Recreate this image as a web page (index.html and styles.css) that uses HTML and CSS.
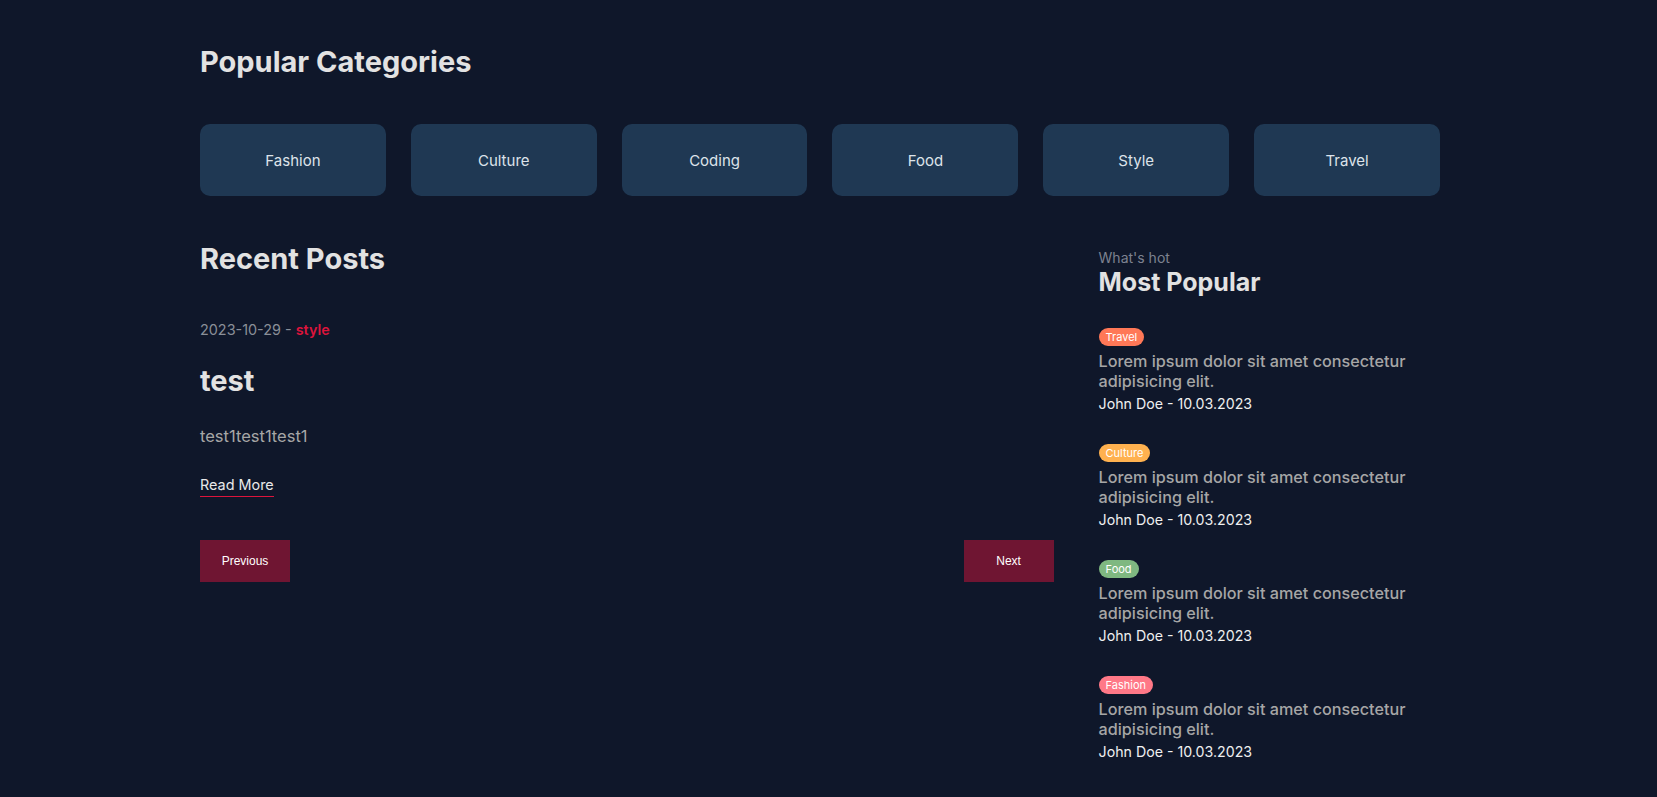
FILE: index.html
```html
<!DOCTYPE html>
<html lang="en">
<head>
<meta charset="utf-8">
<title>Blog</title>
<link rel="stylesheet" href="styles.css">
</head>
<body>
<div class="wrapper">
  <section class="categories">
    <h2 class="section-title">Popular Categories</h2>
    <div class="cat-list">
      <a class="cat-card">Fashion</a>
      <a class="cat-card">Culture</a>
      <a class="cat-card">Coding</a>
      <a class="cat-card">Food</a>
      <a class="cat-card">Style</a>
      <a class="cat-card">Travel</a>
    </div>
  </section>
  <div class="content">
    <main class="posts">
      <h2 class="section-title recent">Recent Posts</h2>
      <article class="post">
        <div class="post-meta"><span class="date">2023-10-29 - </span><span class="cat">style</span></div>
        <h3 class="post-title">test</h3>
        <p class="post-desc">test1test1test1</p>
        <a class="read-more">Read More</a>
      </article>
      <div class="pagination">
        <button class="page-btn">Previous</button>
        <button class="page-btn">Next</button>
      </div>
    </main>
    <aside class="sidebar">
      <div class="subtitle">What's hot</div>
      <h2 class="side-title">Most Popular</h2>
      <div class="pop-list">
        <div class="pop-item">
          <span class="badge travel">Travel</span>
          <div class="pop-text">Lorem ipsum dolor sit amet consectetur adipisicing elit.</div>
          <div class="pop-detail">John Doe - 10.03.2023</div>
        </div>
        <div class="pop-item">
          <span class="badge culture">Culture</span>
          <div class="pop-text">Lorem ipsum dolor sit amet consectetur adipisicing elit.</div>
          <div class="pop-detail">John Doe - 10.03.2023</div>
        </div>
        <div class="pop-item">
          <span class="badge food">Food</span>
          <div class="pop-text">Lorem ipsum dolor sit amet consectetur adipisicing elit.</div>
          <div class="pop-detail">John Doe - 10.03.2023</div>
        </div>
        <div class="pop-item">
          <span class="badge fashion">Fashion</span>
          <div class="pop-text">Lorem ipsum dolor sit amet consectetur adipisicing elit.</div>
          <div class="pop-detail">John Doe - 10.03.2023</div>
        </div>
      </div>
    </aside>
  </div>
</div>
</body>
</html>
```
FILE: styles.css
```css
* { box-sizing: border-box; }
html, body { margin: 0; padding: 0; }
body {
  background: #0f172a;
  color: #dddddd;
  font-family: Inter, "Noto Sans", sans-serif;
  min-height: 797px;
}
.wrapper {
  width: 1240px;
  margin-left: 200px;
  padding-top: 42px;
}
.section-title {
  margin: 0;
  font-size: 29px;
  font-weight: 700;
  line-height: 40px;
  color: #e2e2e2;
}
.cat-list {
  display: flex;
  gap: 25px;
  margin-top: 42px;
}
.cat-card {
  width: 186px;
  height: 72px;
  border-radius: 10px;
  background: #1f3853;
  display: flex;
  align-items: center;
  justify-content: center;
  font-size: 15px;
  color: #dde3ea;
}
.content {
  display: flex;
  gap: 45px;
  margin-top: 43px;
}
.posts { flex: 5; }
.sidebar { flex: 2; padding-top: 10px; }
.post { margin-top: 41px; }
.post-meta { font-size: 14.4px; line-height: 20px; color: #8a8f98; }
.post-meta .cat { color: #dc143c; font-weight: 600; }
.post-title {
  margin: 21px 0 0;
  font-size: 29px;
  font-weight: 700;
  line-height: 40px;
  color: #e2e2e2;
}
.post-desc {
  margin: 23px 0 0;
  font-size: 16.5px;
  line-height: 24px;
  color: #a6a6a6;
}
.read-more {
  display: inline-block;
  margin-top: 27px;
  font-size: 14.4px;
  line-height: 20px;
  color: #e8e8e8;
  border-bottom: 1px solid #dc143c;
  padding-bottom: 1px;
}
.pagination {
  display: flex;
  justify-content: space-between;
  margin-top: 43px;
}
.page-btn {
  width: 90px;
  height: 42px;
  padding: 0;
  border: none;
  background: rgba(220, 20, 60, 0.473);
  color: #fff;
  font-family: "Liberation Sans", Arial, sans-serif;
  font-size: 12px;
}
.subtitle { font-size: 14px; line-height: 18px; color: #7d8290; }
.side-title {
  margin: 0;
  font-size: 25px;
  font-weight: 700;
  line-height: 30px;
  color: #e2e2e2;
}
.pop-list {
  display: flex;
  flex-direction: column;
  gap: 30px;
  margin-top: 31px;
}
.pop-item { display: flex; flex-direction: column; align-items: flex-start; }
.badge {
  font-size: 11px;
  line-height: 18px;
  padding: 0 7px;
  border-radius: 9px;
  color: #fff;
}
.badge.travel { background: #ff7857; }
.badge.culture { background: #ffb14f; }
.badge.food { background: #7fb881; }
.badge.fashion { background: #ff7887; }
.pop-text {
  margin-top: 5px;
  font-size: 16.2px;
  font-weight: 500;
  line-height: 20px;
  color: #a6a6a6;
}
.pop-detail {
  margin-top: 3px;
  font-size: 14.2px;
  line-height: 20px;
  color: #f0f0f0;
}
```
